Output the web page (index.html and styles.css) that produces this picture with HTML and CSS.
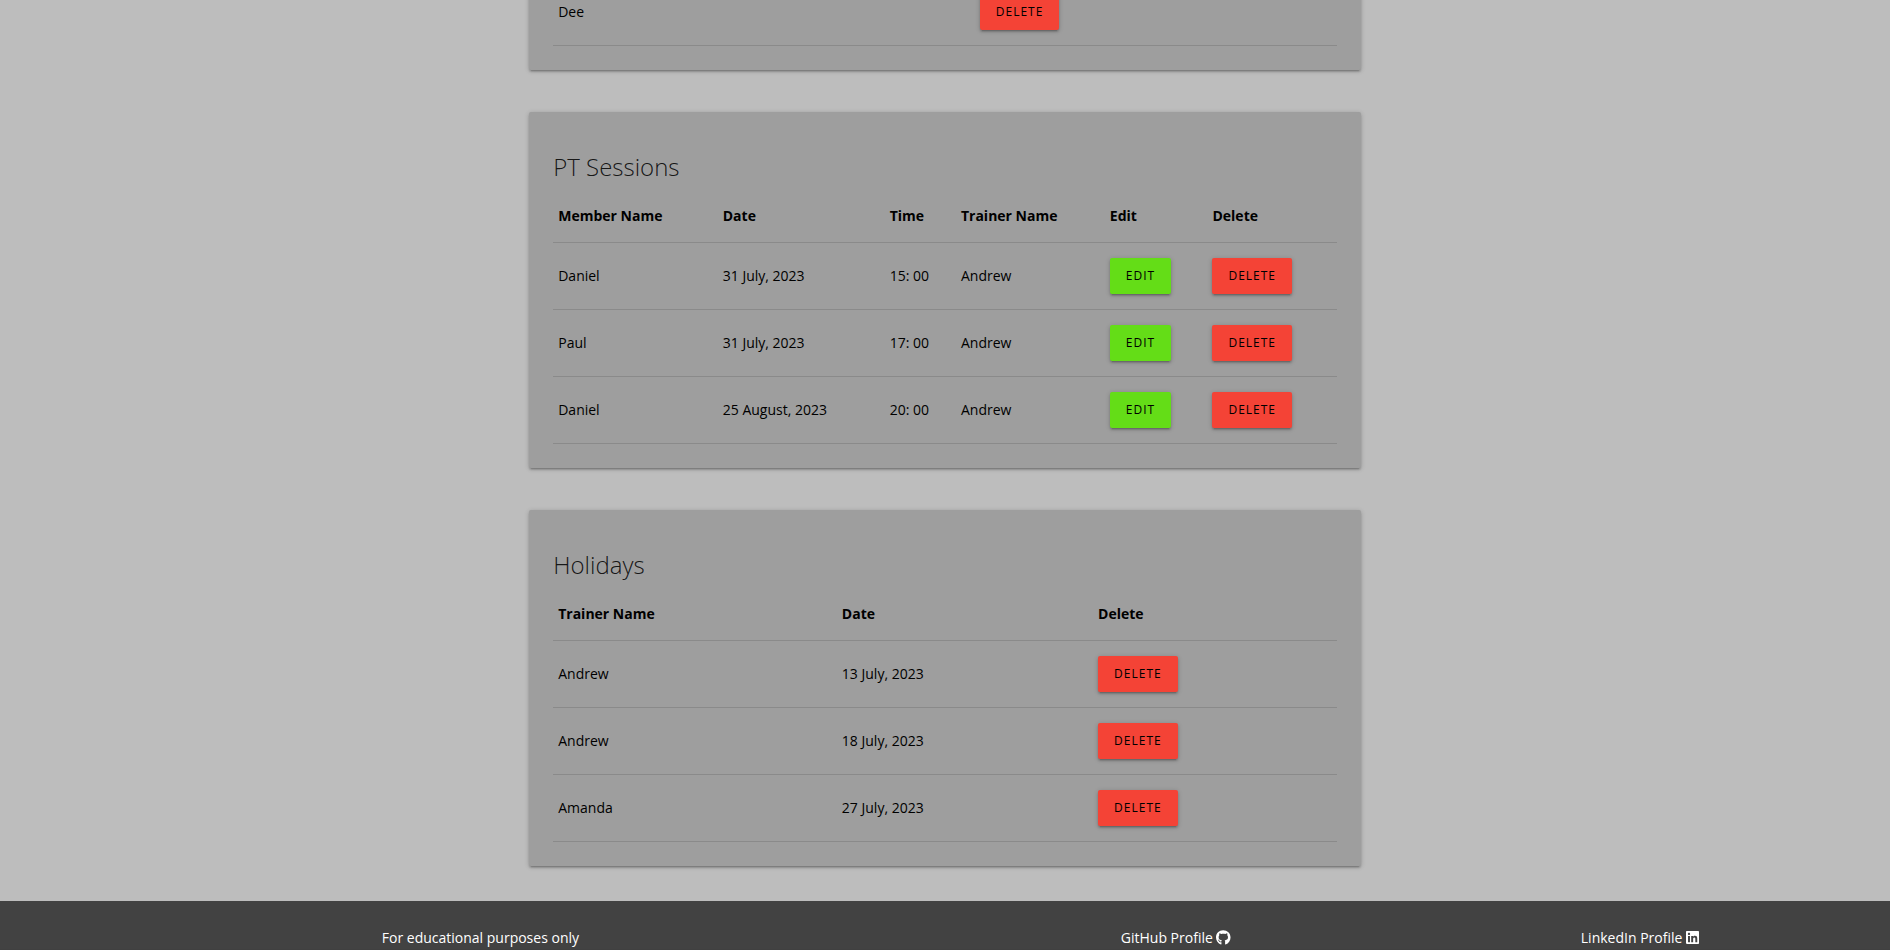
FILE: index.html
```html
<!DOCTYPE html>
<html lang="en">
<head>
<meta charset="utf-8">
<title>Gym Dashboard</title>
<link rel="stylesheet" href="styles.css">
</head>
<body>
<main>
  <section class="card">
    <table>
      <colgroup><col class="w-member"><col></colgroup>
      <tbody>
        <tr><td>Dee</td><td><button class="btn red">Delete</button></td></tr>
      </tbody>
    </table>
  </section>

  <section class="card">
    <h2>PT Sessions</h2>
    <table>
      <colgroup><col class="w-name"><col class="w-date"><col class="w-time"><col class="w-trainer"><col class="w-edit"><col></colgroup>
      <thead>
        <tr><th>Member Name</th><th>Date</th><th>Time</th><th>Trainer Name</th><th>Edit</th><th>Delete</th></tr>
      </thead>
      <tbody>
        <tr><td>Daniel</td><td>31 July, 2023</td><td>15: 00</td><td>Andrew</td><td><button class="btn green">Edit</button></td><td><button class="btn red">Delete</button></td></tr>
        <tr><td>Paul</td><td>31 July, 2023</td><td>17: 00</td><td>Andrew</td><td><button class="btn green">Edit</button></td><td><button class="btn red">Delete</button></td></tr>
        <tr><td>Daniel</td><td>25 August, 2023</td><td>20: 00</td><td>Andrew</td><td><button class="btn green">Edit</button></td><td><button class="btn red">Delete</button></td></tr>
      </tbody>
    </table>
  </section>

  <section class="card">
    <h2>Holidays</h2>
    <table>
      <colgroup><col class="w-holiday-name"><col class="w-holiday-date"><col></colgroup>
      <thead>
        <tr><th>Trainer Name</th><th>Date</th><th>Delete</th></tr>
      </thead>
      <tbody>
        <tr><td>Andrew</td><td>13 July, 2023</td><td><button class="btn red">Delete</button></td></tr>
        <tr><td>Andrew</td><td>18 July, 2023</td><td><button class="btn red">Delete</button></td></tr>
        <tr><td>Amanda</td><td>27 July, 2023</td><td><button class="btn red">Delete</button></td></tr>
      </tbody>
    </table>
  </section>
</main>

<footer>
  <div class="footer-row">
    <p>For educational purposes only</p>
    <a href="#github">GitHub Profile
      <svg viewBox="0 0 496 512" aria-hidden="true"><path d="M165.9 397.4c0 2-2.3 3.6-5.2 3.6-3.3.3-5.6-1.3-5.6-3.6 0-2 2.3-3.6 5.2-3.6 3-.3 5.6 1.3 5.6 3.6zm-31.1-4.500c-.7 2 1.300 4.300 4.300 4.900 2.600 1 5.600 0 6.200-2s-1.300-4.300-4.300-5.200c-2.600-.7-5.500.3-6.200 2.300zM244.800 8C106.100 8 0 113.300 0 252c0 110.900 69.800 205.800 169.500 239.200 12.800 2.300 17.300-5.600 17.300-12.100 0-6.200-.3-40.400-.3-61.400 0 0-70 15-84.700-29.800 0 0-11.400-29.100-27.800-36.600 0 0-22.900-15.700 1.600-15.400 0 0 24.900 2 38.600 25.800 21.900 38.600 58.600 27.500 72.900 20.900 2.300-16 8.800-27.100 16-33.700-55.900-6.200-112.300-14.300-112.300-110.500 0-27.500 7.600-41.300 23.600-58.900-2.600-6.500-11.100-33.300 2.600-67.900 20.900-6.500 69 27 69 27 20-5.600 41.500-8.500 62.800-8.500s42.800 2.900 62.800 8.500c0 0 48.100-33.600 69-27 13.700 34.700 5.200 61.400 2.600 67.900 16 17.700 25.800 31.500 25.800 58.900 0 96.500-58.900 104.200-114.800 110.500 9.200 7.900 17 22.900 17 46.400 0 33.700-.3 75.400-.3 83.600 0 6.500 4.600 14.400 17.300 12.100C428.200 457.800 496 362.900 496 252 496 113.300 383.500 8 244.800 8z"/></svg></a>
    <a href="#linkedin">LinkedIn Profile
      <svg viewBox="0 0 448 512" aria-hidden="true"><path d="M416 32H31.900C14.300 32 0 46.500 0 64.300v383.400C0 465.500 14.300 480 31.900 480H416c17.600 0 32-14.500 32-32.300V64.300c0-17.800-14.400-32.300-32-32.300zM135.400 416H69V202.200h66.500V416zm-33.200-243c-21.300 0-38.500-17.300-38.500-38.500S80.900 96 102.200 96c21.200 0 38.500 17.300 38.500 38.500 0 21.300-17.200 38.500-38.500 38.500zm282.100 243h-66.400V312c0-24.800-.5-56.700-34.500-56.700-34.600 0-39.900 27-39.900 54.900V416h-66.400V202.200h63.700v29.200h.9c8.900-16.800 30.600-34.500 62.900-34.500 67.200 0 79.700 44.300 79.700 101.900V416z"/></svg></a>
  </div>
</footer>
</body>
</html>
```

FILE: styles.css
```css
* {
  box-sizing: border-box;
}

body {
  margin: 0;
  min-height: 100vh;
  overflow: hidden;
  background: #bdbdbd;
  color: #000;
  font: 400 14px/22px "Open Sans", "Noto Sans", sans-serif;
}

main {
  display: flex;
  flex-direction: column;
  gap: 42px;
  width: 44%;
  margin: -45px auto 35px;
}

.card {
  padding: 24px;
  border-radius: 2px;
  background: #9e9e9e;
  box-shadow: 0 2px 2px 0 rgba(0, 0, 0, .14), 0 3px 1px -2px rgba(0, 0, 0, .12), 0 1px 5px 0 rgba(0, 0, 0, .2);
}

h2 {
  margin: 17px 0 9px;
  color: rgba(0, 0, 0, .87);
  font-size: 24px;
  font-weight: 300;
  line-height: 28px;
}

table {
  width: 100%;
  table-layout: fixed;
  border-collapse: collapse;
}

tr {
  border-bottom: 1px solid rgba(0, 0, 0, .12);
}

th,
td {
  padding: 15px 5px;
  text-align: left;
}

th {
  font-weight: 700;
}

.w-member { width: 53.8%; }
.w-name { width: 21%; }
.w-date { width: 21.3%; }
.w-time { width: 9.1%; }
.w-trainer { width: 19%; }
.w-edit { width: 13.1%; }
.w-holiday-name { width: 36.2%; }
.w-holiday-date { width: 32.7%; }

.btn {
  display: block;
  height: 36px;
  padding: 0 16px;
  border: 0;
  border-radius: 2px;
  color: #000;
  font: inherit;
  font-size: 12px;
  letter-spacing: 1px;
  text-transform: uppercase;
  box-shadow: 0 2px 2px 0 rgba(0, 0, 0, .14), 0 3px 1px -2px rgba(0, 0, 0, .12), 0 1px 5px 0 rgba(0, 0, 0, .2);
  cursor: pointer;
}

.red { background: #f44336; }
.green { background: #64dd17; }

footer {
  background: #424242;
  color: #fff;
}

.footer-row {
  display: grid;
  grid-template-columns: 49% 30.5% 1fr;
  padding: 26px 0 0 20.2%;
  border-bottom: 1px solid rgba(51, 51, 51, .08);
}

.footer-row p {
  margin: 0;
}

.footer-row a {
  color: #fff;
  text-decoration: none;
}

.footer-row svg {
  height: 15px;
  fill: #fff;
  vertical-align: -2px;
}
```
